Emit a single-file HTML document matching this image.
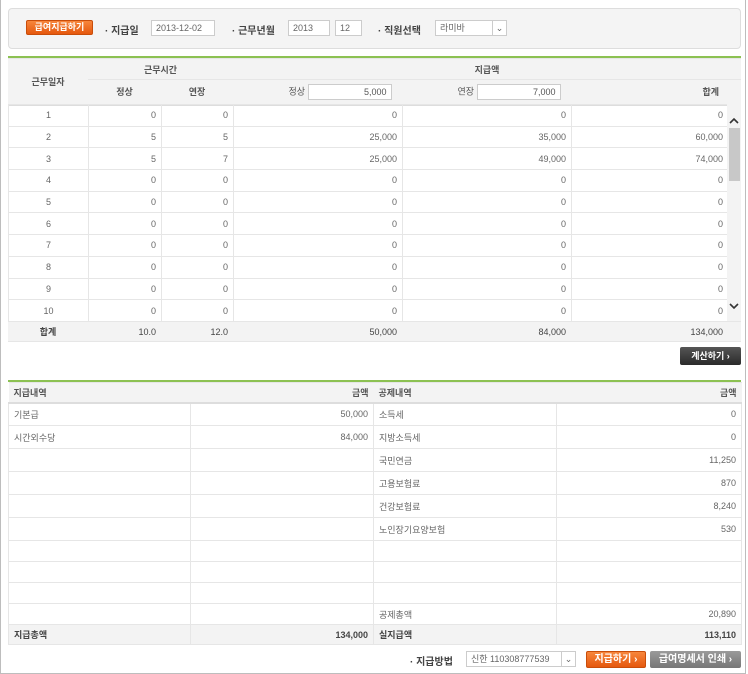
<!DOCTYPE html>
<html><head><meta charset="utf-8">
<style>
*{box-sizing:border-box;margin:0;padding:0}
body{width:748px;height:674px;background:#fff;font-family:"Liberation Sans","Noto Sans CJK KR",sans-serif;font-size:9px;color:#555;position:relative;overflow:hidden}
.frame{position:absolute;left:0;top:0;width:746px;height:674px;border:1px solid #bdbdbd;border-top:none}
.topbar{position:absolute;left:8px;top:8px;width:733px;height:41px;background:#f4f4f4;border:1px solid #ddd;border-radius:4px}
.abs{position:absolute}
.obtn{position:absolute;background:linear-gradient(#f7863c,#e5580e);color:#fff;font-weight:bold;font-size:9px;text-align:center;border-radius:2px;border:1px solid #c94d0a}
.lbl{position:absolute;font-size:10px;font-weight:bold;color:#444}
.inp{position:absolute;height:16px;border:1px solid #ccc;background:#fff;font-size:9px;line-height:14px;padding:0 4px;color:#666}
table{border-collapse:collapse;table-layout:fixed;position:absolute}
td{border:1px solid #e6e6e6;padding:0 5px;font-size:9px;color:#666;white-space:nowrap;overflow:hidden}
.r{text-align:right}.c{text-align:center}
.hd td{background:#f3f3f3;font-weight:bold;color:#555;border-left:none;border-right:none}
.tot td{background:#f3f3f3;font-weight:bold;color:#444;border-left:none;border-right:none}
.green{position:absolute;height:2px;background:#8cc152}
</style></head><body>
<div class="frame"></div>
<div class="topbar"></div>
<div class="obtn" style="left:26px;top:20px;width:67px;height:15px;line-height:13px">급여지급하기</div>
<div class="lbl" style="left:105px;top:22px">· 지급일</div>
<div class="inp" style="left:151px;top:20px;width:64px">2013-12-02</div>
<div class="lbl" style="left:232px;top:22px">· 근무년월</div>
<div class="inp" style="left:288px;top:20px;width:42px">2013</div>
<div class="inp" style="left:335px;top:20px;width:27px">12</div>
<div class="lbl" style="left:378px;top:22px">· 직원선택</div>
<div class="inp" style="left:435px;top:20px;width:72px">라미바<span style="position:absolute;right:0;top:0;width:14px;border-left:1px solid #ccc;text-align:center">⌄</span></div>

<div class="green" style="left:8px;top:56px;width:733px"></div>
<table style="left:8px;top:58px;width:733px">
<colgroup><col style="width:80px"><col style="width:73px"><col style="width:72px"><col style="width:169px"><col style="width:169px"><col style="width:170px"></colgroup>
<tr class="hd" style="height:21px"><td rowspan="2" class="c" style="border-bottom:2px solid #ddd">근무일자</td><td colspan="2" class="c">근무시간</td><td colspan="3" class="c">지급액</td></tr>
<tr class="hd" style="height:25px;border-bottom:2px solid #ddd"><td class="c">정상</td><td class="c">연장</td><td class="c" style="padding-left:50px;font-weight:normal">정상 <span style="display:inline-block;width:84px;height:16px;border:1px solid #ccc;background:#fff;text-align:right;padding-right:4px;line-height:14px;vertical-align:middle;font-weight:normal">5,000</span></td><td class="c" style="padding-left:50px;font-weight:normal">연장 <span style="display:inline-block;width:84px;height:16px;border:1px solid #ccc;background:#fff;text-align:right;padding-right:4px;line-height:14px;vertical-align:middle">7,000</span></td><td class="r" style="padding-right:22px">합계</td></tr>
</table>
<table style="left:8px;top:104px;width:720px">
<colgroup><col style="width:80px"><col style="width:73px"><col style="width:72px"><col style="width:169px"><col style="width:169px"><col style="width:157px"></colgroup>
<tr style="height:21.7px"><td class="c">1</td><td class="r">0</td><td class="r">0</td><td class="r">0</td><td class="r">0</td><td class="r">0</td></tr>
<tr style="height:21.7px"><td class="c">2</td><td class="r">5</td><td class="r">5</td><td class="r">25,000</td><td class="r">35,000</td><td class="r">60,000</td></tr>
<tr style="height:21.7px"><td class="c">3</td><td class="r">5</td><td class="r">7</td><td class="r">25,000</td><td class="r">49,000</td><td class="r">74,000</td></tr>
<tr style="height:21.7px"><td class="c">4</td><td class="r">0</td><td class="r">0</td><td class="r">0</td><td class="r">0</td><td class="r">0</td></tr>
<tr style="height:21.7px"><td class="c">5</td><td class="r">0</td><td class="r">0</td><td class="r">0</td><td class="r">0</td><td class="r">0</td></tr>
<tr style="height:21.7px"><td class="c">6</td><td class="r">0</td><td class="r">0</td><td class="r">0</td><td class="r">0</td><td class="r">0</td></tr>
<tr style="height:21.7px"><td class="c">7</td><td class="r">0</td><td class="r">0</td><td class="r">0</td><td class="r">0</td><td class="r">0</td></tr>
<tr style="height:21.7px"><td class="c">8</td><td class="r">0</td><td class="r">0</td><td class="r">0</td><td class="r">0</td><td class="r">0</td></tr>
<tr style="height:21.7px"><td class="c">9</td><td class="r">0</td><td class="r">0</td><td class="r">0</td><td class="r">0</td><td class="r">0</td></tr>
<tr style="height:21.7px"><td class="c">10</td><td class="r">0</td><td class="r">0</td><td class="r">0</td><td class="r">0</td><td class="r">0</td></tr>
</table>
<div class="abs" style="left:727px;top:104px;width:14px;height:217px;background:#f3f3f3"></div>
<div class="abs" style="left:729px;top:128px;width:11px;height:53px;background:#c8c8c8"></div>
<svg class="abs" style="left:728px;top:117px" width="12" height="8"><path d="M2 6 L6 2 L10 6" stroke="#333" stroke-width="1.6" fill="none"/></svg>
<svg class="abs" style="left:728px;top:302px" width="12" height="8"><path d="M2 2 L6 6 L10 2" stroke="#333" stroke-width="1.6" fill="none"/></svg>
<table style="left:8px;top:321px;width:733px">
<colgroup><col style="width:80px"><col style="width:73px"><col style="width:72px"><col style="width:169px"><col style="width:169px"><col style="width:170px"></colgroup>
<tr class="tot" style="height:20px"><td class="c">합계</td><td class="r" style="font-weight:normal">10.0</td><td class="r" style="font-weight:normal">12.0</td><td class="r" style="font-weight:normal">50,000</td><td class="r" style="font-weight:normal">84,000</td><td class="r" style="font-weight:normal;padding-right:18px">134,000</td></tr>
</table>
<div class="abs" style="left:680px;top:347px;width:61px;height:18px;background:linear-gradient(#555,#2a2a2a);border-radius:2px;color:#fff;font-weight:bold;text-align:center;line-height:18px">계산하기 ›</div>

<div class="green" style="left:8px;top:380px;width:733px"></div>
<table style="left:8px;top:382px;width:733px">
<colgroup><col style="width:182px"><col style="width:183px"><col style="width:183px"><col style="width:185px"></colgroup>
<tr class="hd" style="height:20px;border-bottom:2px solid #ddd"><td>지급내역</td><td class="r">금액</td><td>공제내역</td><td class="r">금액</td></tr>
<tr style="height:23px"><td>기본급</td><td class="r">50,000</td><td>소득세</td><td class="r">0</td></tr>
<tr style="height:23px"><td>시간외수당</td><td class="r">84,000</td><td>지방소득세</td><td class="r">0</td></tr>
<tr style="height:23px"><td></td><td></td><td>국민연금</td><td class="r">11,250</td></tr>
<tr style="height:23px"><td></td><td></td><td>고용보험료</td><td class="r">870</td></tr>
<tr style="height:23px"><td></td><td></td><td>건강보험료</td><td class="r">8,240</td></tr>
<tr style="height:23px"><td></td><td></td><td>노인장기요양보험</td><td class="r">530</td></tr>
<tr style="height:21px"><td></td><td></td><td></td><td></td></tr>
<tr style="height:21px"><td></td><td></td><td></td><td></td></tr>
<tr style="height:21px"><td></td><td></td><td></td><td></td></tr>
<tr style="height:21px"><td></td><td></td><td>공제총액</td><td class="r">20,890</td></tr>
<tr style="height:20px"><td style="background:#f3f3f3;font-weight:bold;color:#444">지급총액</td><td class="r" style="background:#f3f3f3;font-weight:bold;color:#444">134,000</td><td style="background:#f3f3f3;font-weight:bold;color:#444">실지급액</td><td class="r" style="background:#f3f3f3;font-weight:bold;color:#444">113,110</td></tr>
</table>

<div class="lbl" style="left:410px;top:653px">· 지급방법</div>
<div class="inp" style="left:466px;top:651px;width:110px">신한 110308777539<span style="position:absolute;right:0;top:0;width:14px;border-left:1px solid #ccc;text-align:center">⌄</span></div>
<div class="obtn" style="left:586px;top:651px;width:60px;height:17px;line-height:15px;font-size:10px">지급하기 ›</div>
<div class="abs" style="left:650px;top:651px;width:91px;height:17px;line-height:17px;background:linear-gradient(#9a9a9a,#777);border-radius:2px;color:#fff;font-weight:bold;font-size:10px;text-align:center">급여명세서 인쇄 ›</div>
</body></html>
